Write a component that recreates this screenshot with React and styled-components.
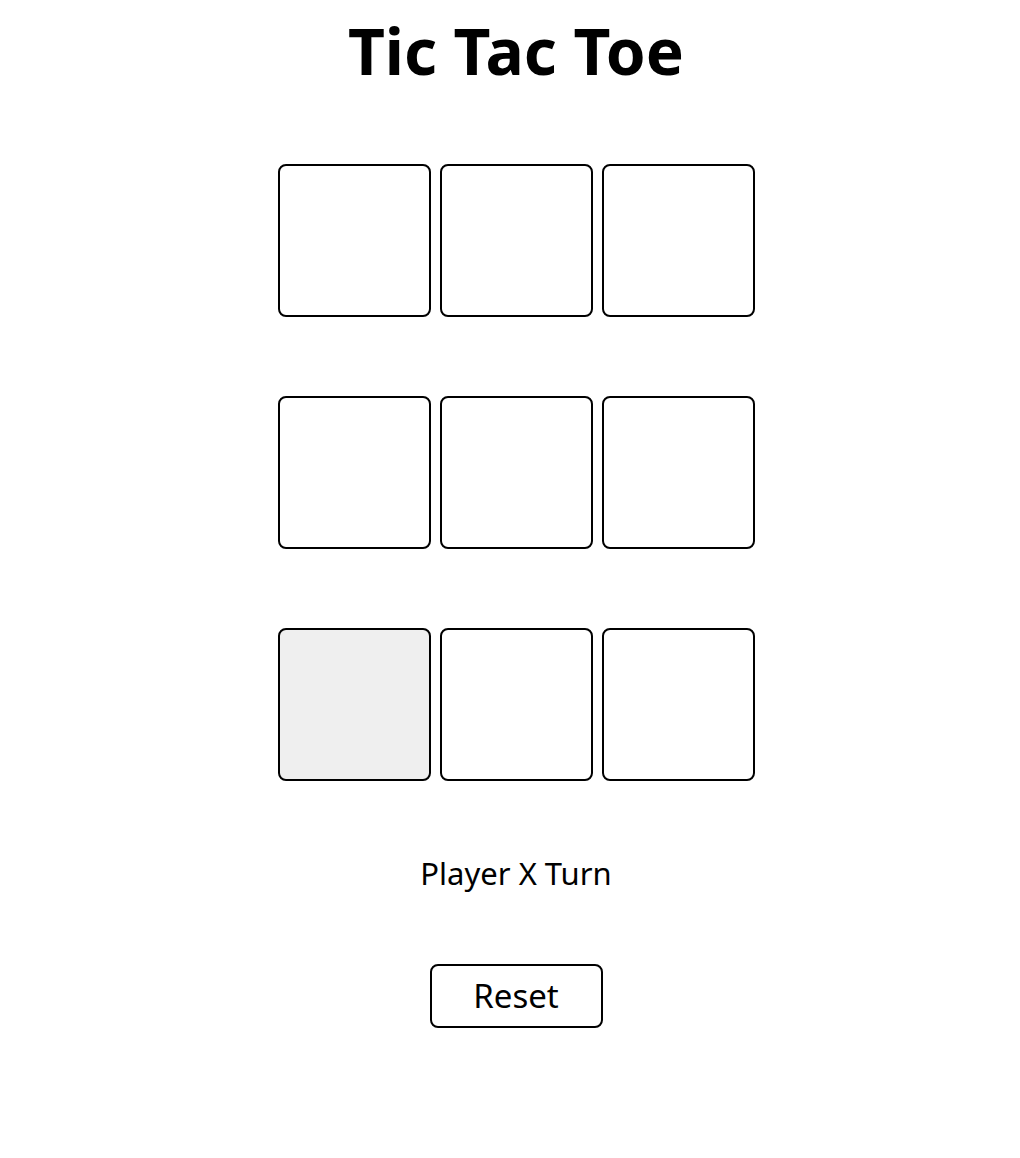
import { useState } from 'react';
import styled, { createGlobalStyle } from 'styled-components';

const GlobalStyle = createGlobalStyle`
  body {
    margin: 0;
    background: #ffffff;
    font-family: 'Noto Sans', 'Open Sans', sans-serif;
    color: #000;
  }
`;

const Page = styled.main`
  display: flex;
  flex-direction: column;
  align-items: center;
  padding: 7px 0 0 12px;
`;

const Title = styled.h1`
  margin: 0 0 69px;
  font-size: 64px;
  line-height: 88px;
  font-weight: 700;
`;

const Board = styled.div`
  display: flex;
  flex-direction: column;
  gap: 79px;
`;

const Row = styled.div`
  display: flex;
  gap: 9px;
`;

const Cell = styled.button`
  width: 153px;
  height: 153px;
  box-sizing: border-box;
  border: 2px solid #000;
  border-radius: 8px;
  background: ${(p) => (p.$hover ? '#efefef' : '#fff')};
  font-family: inherit;
  font-size: 64px;
  font-weight: 700;
  cursor: pointer;
  padding: 0;
`;

const Status = styled.p`
  margin: 72px 0 0;
  font-size: 31px;
  line-height: 41px;
`;

const ResetButton = styled.button`
  margin-top: 70px;
  width: 173px;
  height: 64px;
  box-sizing: border-box;
  border: 2px solid #000;
  border-radius: 8px;
  background: #fff;
  font-family: inherit;
  font-size: 33px;
  line-height: 44px;
  padding: 0;
  color: #000;
  cursor: pointer;
`;

export default function App() {
  const [cells, setCells] = useState(Array(9).fill(''));
  const [turn, setTurn] = useState('X');

  const play = (i) => {
    if (cells[i]) return;
    const next = [...cells];
    next[i] = turn;
    setCells(next);
    setTurn(turn === 'X' ? 'O' : 'X');
  };

  const reset = () => {
    setCells(Array(9).fill(''));
    setTurn('X');
  };

  return (
    <Page>
      <GlobalStyle />
      <Title>Tic Tac Toe</Title>
      <Board>
        {[0, 1, 2].map((r) => (
          <Row key={r}>
            {[0, 1, 2].map((c) => {
              const i = r * 3 + c;
              return (
                <Cell key={i} $hover={i === 6} onClick={() => play(i)}>
                  {cells[i]}
                </Cell>
              );
            })}
          </Row>
        ))}
      </Board>
      <Status>Player {turn} Turn</Status>
      <ResetButton onClick={reset}>Reset</ResetButton>
    </Page>
  );
}
